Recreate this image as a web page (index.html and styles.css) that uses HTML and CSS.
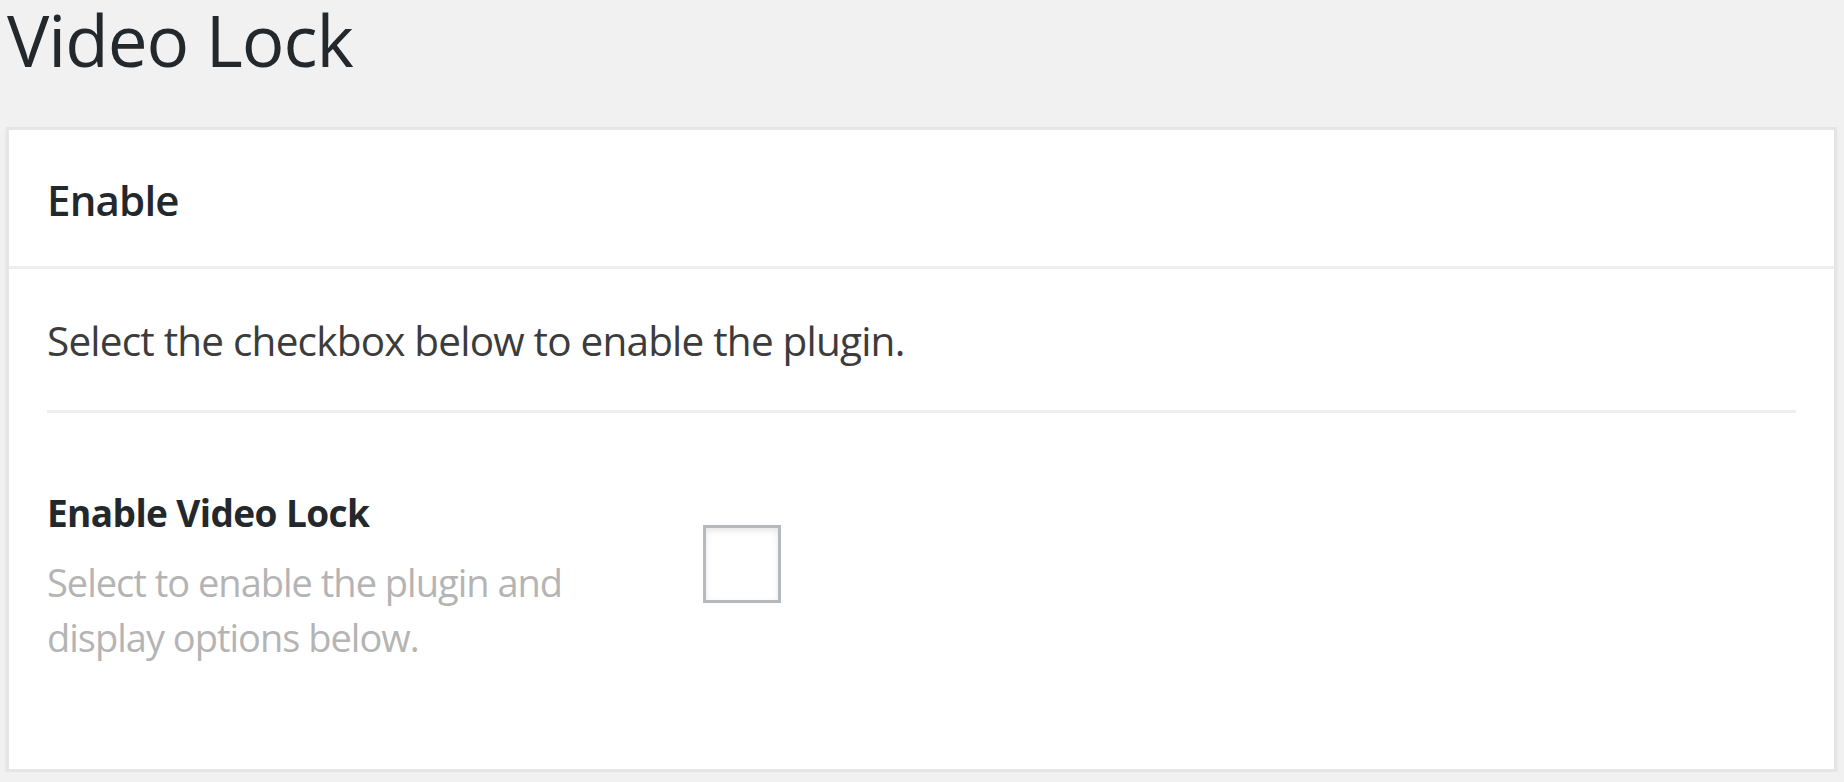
FILE: index.html
```html
<!DOCTYPE html>
<html lang="en">
<head>
<meta charset="utf-8">
<title>Video Lock</title>
<link rel="stylesheet" href="styles.css">
</head>
<body>
<div class="wrap">
  <h1 class="page-title">Video Lock</h1>
  <div class="postbox">
    <h2 class="postbox-header">Enable</h2>
    <div class="inside">
      <p class="intro">Select the checkbox below to enable the plugin.</p>
      <div class="setting">
        <div class="setting-text">
          <div class="setting-label">Enable Video Lock</div>
          <div class="setting-desc">Select to enable the plugin and display options below.</div>
        </div>
        <input type="checkbox" class="toggle" aria-label="Enable Video Lock">
      </div>
    </div>
  </div>
</div>
</body>
</html>
```
FILE: styles.css
```css
html, body {
  margin: 0;
  padding: 0;
  background: #f1f1f1;
}
body {
  font-family: "Open Sans", "Noto Sans", sans-serif;
  color: #23282d;
}
.wrap {
  padding: 0 7px 0 6px;
}
.page-title {
  margin: 4px 0 0 1px;
  font-size: 71px;
  line-height: 71px;
  font-weight: 400;
  color: #23282d;
  letter-spacing: -1px;
}
.postbox {
  margin-top: 52px;
  background: #fff;
  border: 3px solid #e5e5e5;
  box-shadow: 0 3px 4px rgba(0, 0, 0, 0.05);
}
.postbox-header {
  margin: 0;
  padding: 49px 38px 45px 38px;
  font-size: 42px;
  line-height: 42px;
  font-weight: 600;
  border-bottom: 3px solid #eee;
  letter-spacing: -0.8px;
}
.inside {
  padding: 52px 38px 104px 38px;
}
.intro {
  margin: 0;
  padding-bottom: 48px;
  border-bottom: 3px solid #eee;
  font-size: 40.5px;
  line-height: 40.5px;
  color: #3c3c3c;
  letter-spacing: -0.8px;
}
.setting {
  display: grid;
  grid-template-columns: 656px 78px;
  align-items: start;
}
.setting-text {
  padding-top: 81px;
}
.setting-label {
  font-size: 37px;
  line-height: 37px;
  font-weight: 700;
  color: #23282d;
  letter-spacing: -0.6px;
}
.setting-desc {
  margin-top: 24px;
  max-width: 590px;
  font-size: 38px;
  line-height: 55px;
  color: #b4b4b4;
  letter-spacing: -1px;
}
.toggle {
  -webkit-appearance: none;
  appearance: none;
  box-sizing: border-box;
  margin: 112px 0 0 0;
  width: 78px;
  height: 78px;
  background: #fff;
  border: 3px solid #b4b9be;
  border-radius: 0;
  box-shadow: inset 0 3px 6px rgba(0, 0, 0, 0.1);
}
```
